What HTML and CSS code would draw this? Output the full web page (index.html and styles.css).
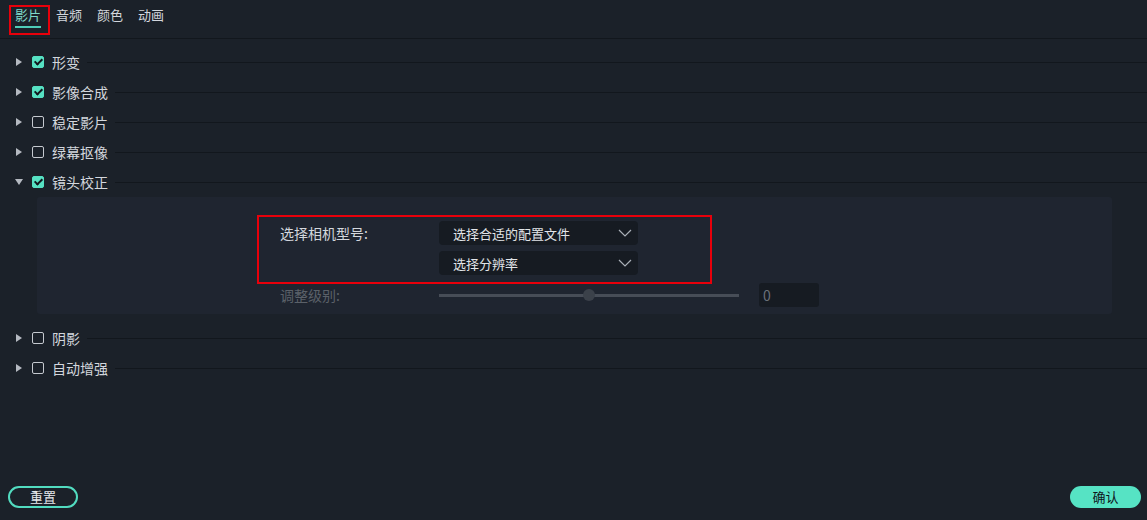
FILE: index.html
```html
<!DOCTYPE html>
<html lang="zh">
<head>
<meta charset="utf-8">
<link rel="stylesheet" href="styles.css">
</head>
<body>
<div class="app">
  <div class="tabs">
    <div class="tab active">影片</div>
    <div class="tab">音频</div>
    <div class="tab">颜色</div>
    <div class="tab">动画</div>
  </div>
  <div class="list">
    <div class="row"><span class="tri"></span><span class="cb on"></span><span class="label">形变</span><span class="line"></span></div>
    <div class="row"><span class="tri"></span><span class="cb on"></span><span class="label">影像合成</span><span class="line"></span></div>
    <div class="row"><span class="tri"></span><span class="cb"></span><span class="label">稳定影片</span><span class="line"></span></div>
    <div class="row"><span class="tri"></span><span class="cb"></span><span class="label">绿幕抠像</span><span class="line"></span></div>
    <div class="row"><span class="tri down"></span><span class="cb on"></span><span class="label">镜头校正</span><span class="line"></span></div>
    <div class="panel">
      <div class="prow">
        <div class="plabel">选择相机型号:</div>
        <div class="selects">
          <div class="select"><span>选择合适的配置文件</span><svg width="14" height="8" viewBox="0 0 14 8"><path d="M1 1 L7 7 L13 1" fill="none" stroke="#aab0b8" stroke-width="1.2"/></svg></div>
          <div class="select"><span>选择分辨率</span><svg width="14" height="8" viewBox="0 0 14 8"><path d="M1 1 L7 7 L13 1" fill="none" stroke="#aab0b8" stroke-width="1.2"/></svg></div>
        </div>
      </div>
      <div class="prow slider-row">
        <div class="plabel dim">调整级别:</div>
        <div class="slider"><div class="track"></div><div class="thumb"></div></div>
        <div class="numbox">0</div>
      </div>
    </div>
    <div class="row"><span class="tri"></span><span class="cb"></span><span class="label">阴影</span><span class="line"></span></div>
    <div class="row"><span class="tri"></span><span class="cb"></span><span class="label">自动增强</span><span class="line"></span></div>
  </div>
  <div class="spacer"></div>
  <div class="footer">
    <button class="btn outline">重置</button>
    <button class="btn fill">确认</button>
  </div>
  <div class="mark mark-tab"></div>
  <div class="mark mark-panel"></div>
</div>
</body>
</html>
```

FILE: styles.css
```css
* { box-sizing: border-box; }
html, body { margin: 0; padding: 0; }
body {
  background: #1b2129;
  font-family: "Noto Sans CJK SC", "Noto Sans", sans-serif;
  font-size: 13px;
  color: #d3d7dd;
}
.app {
  position: relative;
  width: 1147px;
  height: 520px;
  display: flex;
  flex-direction: column;
}
.tabs {
  height: 39px;
  border-bottom: 1px solid #12171d;
  display: flex;
  gap: 15px;
  padding-left: 15px;
}
.tab {
  height: 28px;
  line-height: 30px;
  color: #d3d7dd;
  position: relative;
}
.tab.active { color: #7fd9c8; }
.tab.active::after {
  content: "";
  position: absolute;
  left: 0; right: 0; bottom: 0;
  height: 2px;
  background: #4fcdb8;
}
.list {
  padding-top: 8px;
  display: flex;
  flex-direction: column;
}
.row {
  height: 30px;
  display: flex;
  align-items: center;
  padding-left: 16px;
}
.tri {
  width: 0; height: 0;
  border-left: 6px solid #b5bac1;
  border-top: 4px solid transparent;
  border-bottom: 4px solid transparent;
  margin-right: 10px;
}
.tri.down {
  border-left: 4px solid transparent;
  border-right: 4px solid transparent;
  border-top: 6px solid #b5bac1;
  border-bottom: 0;
  margin-left: -1px;
  margin-right: 9px;
}
.cb {
  width: 12px; height: 12px;
  border: 1px solid #c5c9cf;
  border-radius: 2px;
  margin-right: 8px;
  position: relative;
}
.cb.on {
  background: #56e1c3;
  border-color: #56e1c3;
}
.cb.on::after {
  content: "";
  position: absolute;
  left: 3px; top: 0px;
  width: 3px; height: 6px;
  border-right: 2px solid #10161c;
  border-bottom: 2px solid #10161c;
  transform: rotate(45deg);
}
.label {
  white-space: nowrap;
  font-size: 14px;
  line-height: 20px;
  margin-top: -1px;
}
.line {
  flex: 1;
  height: 1px;
  background: #12171d;
  margin-left: 7px;
}
.panel {
  margin: 0 35px 9px 37px;
  height: 117px;
  background: #1f2530;
  border-radius: 3px;
  padding: 24px 0 0 243px;
  display: flex;
  flex-direction: column;
}
.prow {
  display: flex;
}
.plabel {
  width: 159px;
  line-height: 24px;
  font-size: 14px;
  color: #d3d7dd;
}
.plabel.dim { color: #5b6169; }
.selects {
  display: flex;
  flex-direction: column;
  gap: 6px;
}
.select {
  width: 199px;
  height: 24px;
  background: #161b22;
  border-radius: 4px;
  display: flex;
  align-items: center;
  justify-content: space-between;
  padding: 0 6px 0 14px;
  color: #e2e5e9;
}
.slider-row {
  margin-top: 8px;
  align-items: center;
}
.slider {
  width: 300px;
  height: 12px;
  position: relative;
  display: flex;
  align-items: center;
}
.track {
  width: 100%;
  height: 3px;
  background: #474d57;
}
.thumb {
  position: absolute;
  left: 144px;
  top: 0;
  width: 12px; height: 12px;
  border-radius: 50%;
  background: #3b414a;
}
.numbox {
  margin-left: 20px;
  width: 60px;
  height: 24px;
  background: #161b22;
  border-radius: 3px;
  line-height: 24px;
  padding-left: 4px;
  color: #6b717a;
  font-size: 14px;
}
.spacer { flex: 1; }
.footer {
  display: flex;
  justify-content: space-between;
  padding: 0 6px 12px 8px;
}
.btn {
  font-family: inherit;
  font-size: 13px;
  height: 22px;
  border-radius: 11px;
  padding: 0;
  line-height: 18px;
}
.btn.outline {
  width: 70px;
  background: transparent;
  border: 2px solid #52dcc0;
  color: #e6e9ec;
}
.btn.fill {
  width: 71px;
  background: #56e3c4;
  border: 0;
  color: #10161c;
}
.mark {
  position: absolute;
  border: 2px solid #e8000b;
  pointer-events: none;
}
.mark-tab { left: 9px; top: 5px; width: 41px; height: 30px; }
.mark-panel { left: 257px; top: 215px; width: 455px; height: 69px; }
```
